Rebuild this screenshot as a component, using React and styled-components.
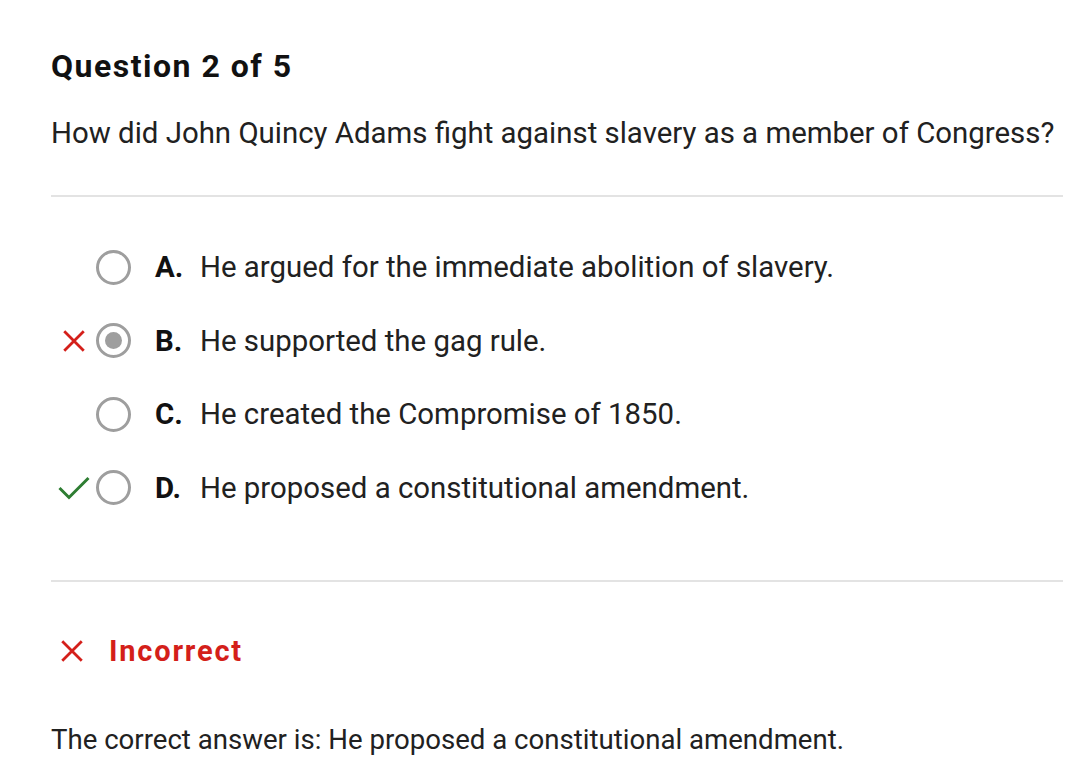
import React from 'react';
import styled, { createGlobalStyle } from 'styled-components';

const GlobalStyle = createGlobalStyle`
  body {
    margin: 0;
    background: #ffffff;
    font-family: Roboto, "Liberation Sans", sans-serif;
    color: #212121;
  }
`;

const Page = styled.div`
  padding: 44px 22px 0 51px;
`;

const Title = styled.h2`
  margin: 0;
  font-size: 32px;
  font-weight: 700;
  letter-spacing: 1.5px;
  line-height: 44px;
  color: #111;
`;

const Prompt = styled.p`
  margin: 27px 0 0;
  font-size: 29.4px;
  line-height: 36px;
  color: #212121;
  white-space: nowrap;
`;

const Divider = styled.hr`
  border: none;
  height: 2px;
  background: #e3e3e3;
  margin: ${(p) => p.$top}px 0 0;
`;

const Options = styled.div`
  display: flex;
  flex-direction: column;
  gap: 37.5px;
  margin-top: 52px;
`;

const Row = styled.div`
  display: flex;
  align-items: center;
  height: 36px;
`;

const Marker = styled.div`
  width: 45px;
  display: flex;
  justify-content: center;
  align-items: center;
`;

const Radio = styled.span`
  box-sizing: border-box;
  width: 35px;
  height: 35px;
  border-radius: 50%;
  border: 3px solid #9e9e9e;
  display: flex;
  align-items: center;
  justify-content: center;
  &::after {
    content: '';
    display: ${(p) => (p.$checked ? 'block' : 'none')};
    width: 17px;
    height: 17px;
    border-radius: 50%;
    background: #9e9e9e;
  }
`;

const Letter = styled.span`
  width: 45px;
  margin-left: 24px;
  font-size: 29.4px;
  font-weight: 700;
  color: #111;
`;

const OptionText = styled.span`
  font-size: 29.4px;
  color: #212121;
`;

const Verdict = styled.div`
  display: flex;
  align-items: center;
  gap: 24px;
  margin-top: 52px;
  padding-left: 8px;
  color: #d41f1a;
  font-size: 29px;
  font-weight: 700;
  letter-spacing: 1.8px;
`;

const Answer = styled.p`
  margin: 54px 0 0;
  font-size: 27.6px;
  line-height: 36px;
  color: #212121;
`;

const Cross = ({ size = 26, color = '#d41f1a' }) => (
  <svg width={size} height={size} viewBox="0 0 24 24">
    <path d="M3 3 L21 21 M21 3 L3 21" stroke={color} strokeWidth="2.6" fill="none" />
  </svg>
);

const Check = () => (
  <svg width="32" height="24" viewBox="0 0 32 24">
    <path d="M1.5 12 L11 21.5 L30.5 2" stroke="#2e7d32" strokeWidth="3" fill="none" />
  </svg>
);

const options = [
  { letter: 'A.', text: 'He argued for the immediate abolition of slavery.' },
  { letter: 'B.', text: 'He supported the gag rule.', checked: true, mark: 'wrong' },
  { letter: 'C.', text: 'He created the Compromise of 1850.' },
  { letter: 'D.', text: 'He proposed a constitutional amendment.', mark: 'right' },
];

const App = () => {
  return (
    <Page>
      <GlobalStyle />
      <Title>Question 2 of 5</Title>
      <Prompt>How did John Quincy Adams fight against slavery as a member of Congress?</Prompt>
      <Divider $top={44} />
      <Options>
        {options.map((o) => (
          <Row key={o.letter}>
            <Marker>
              {o.mark === 'wrong' && <Cross size={26} />}
              {o.mark === 'right' && <Check />}
            </Marker>
            <Radio $checked={o.checked} />
            <Letter>{o.letter}</Letter>
            <OptionText>{o.text}</OptionText>
          </Row>
        ))}
      </Options>
      <Divider $top={74} />
      <Verdict>
        <Cross size={26} />
        Incorrect
      </Verdict>
      <Answer>The correct answer is: He proposed a constitutional amendment.</Answer>
    </Page>
  );
};

export default App;
